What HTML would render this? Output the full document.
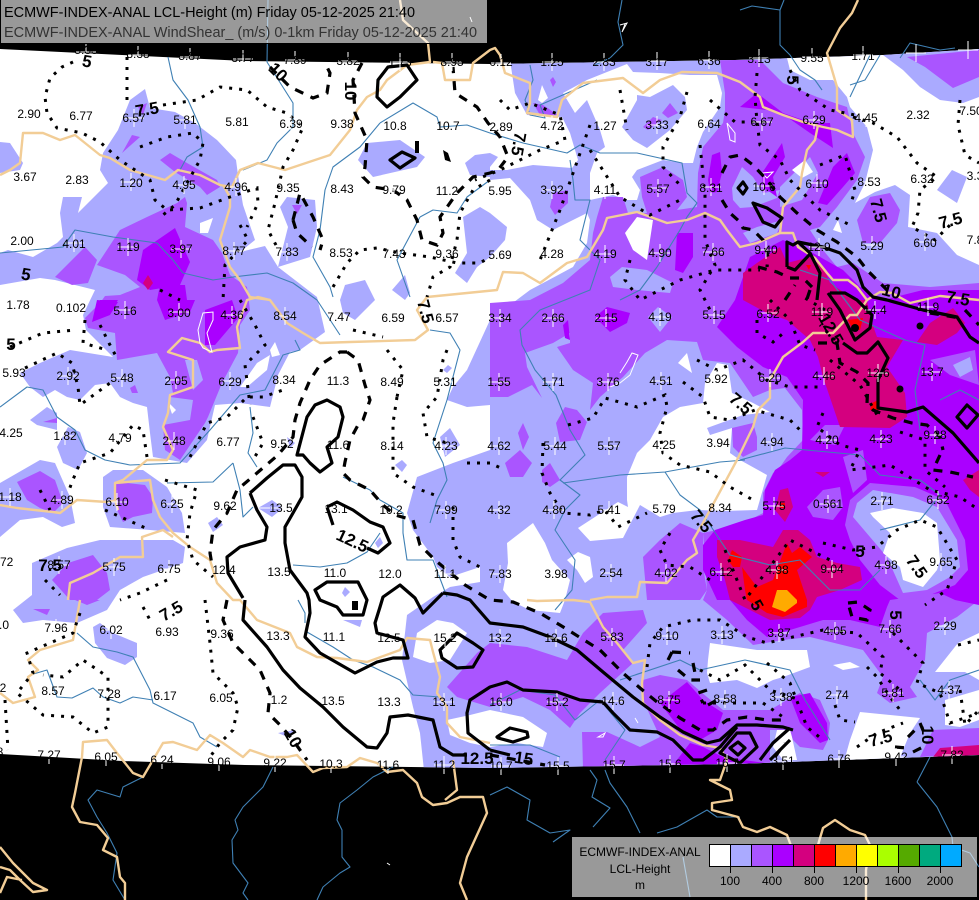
<!DOCTYPE html>
<html><head><meta charset="utf-8"><title>ECMWF-INDEX-ANAL LCL-Height</title>
<style>
html,body{margin:0;padding:0;background:#000;width:979px;height:900px;overflow:hidden}
svg{display:block;font-family:"Liberation Sans",sans-serif}
.b{fill:#aaaaff}.w{fill:#fff}.m{fill:#aa55ff}.d{fill:#aa00ff}.g{fill:#d4007f}.r{fill:#f00}.o{fill:#ffaa00}
.tan{fill:none;stroke:#f2cd96;stroke-width:2.4;stroke-linejoin:round}
.riv{fill:none;stroke:#3f80b4;stroke-width:1.1;stroke-linejoin:round}
.lk{fill:none;stroke:#fff;stroke-width:1}
.s{fill:none;stroke:#000;stroke-width:3.2;stroke-linejoin:round}
.da{fill:none;stroke:#000;stroke-width:3.2;stroke-dasharray:9 8}
.dt{fill:none;stroke:#000;stroke-width:3;stroke-dasharray:3 7}
.t text{font-size:12px;text-anchor:middle;fill:#000}
.c{fill:none;stroke:none;marker-start:url(#x);marker-mid:url(#x);marker-end:url(#x)}
.big text{font-size:17px;font-weight:bold;text-anchor:middle;fill:#000}
</style></head><body>
<svg width="979" height="900" viewBox="0 0 979 900" xmlns="http://www.w3.org/2000/svg">
<defs>
<clipPath id="band"><path d="M0,49 L122,55 245,61 490,64 735,60 883,55 979,49 L979,755 735,764 490,768 245,765 122,761 0,754Z"/></clipPath>
<marker id="x" markerUnits="userSpaceOnUse" markerWidth="22" markerHeight="20" refX="11" refY="10" overflow="visible"><path d="M1,10H21M11,1V19" stroke="#fff" stroke-width="1" fill="none"/></marker>
</defs>
<rect width="979" height="900" fill="#000"/>
<g clip-path="url(#band)">
<rect width="979" height="900" fill="#fff"/>
<!-- blue base -->
<path class="b" d="M425,780L420,733 413,707 402,660 407,615 433,597 450,587 480,582 480,567 450,577 437,567 433,557 413,530 407,513 417,477 453,463 490,450 490,405 467,407 447,400 453,387 467,370 490,320 490,40 979,40 979,780Z"/>
<!-- left blue -->
<path class="b" d="M130,100L145,89 150,108 175,112 195,123 217,140 236,160 238,175 243,205 255,240 240,252 265,246 278,267 317,297 325,332 300,350 290,352 278,375 270,407 240,403 215,405 207,440 187,463 153,457 150,433 147,407 133,403 120,397 110,383 95,385 80,400 67,397 55,390 43,397 30,387 20,373 40,363 70,350 113,357 86,330 83,315 95,290 55,280 40,278 0,285 0,253 8,250 33,257 57,243 63,237 60,213 63,197 82,197 78,213 108,183 100,170 103,153 118,130Z"/>
<path class="w" d="M200,223L213,218 208,233 200,233ZM240,387L257,363 270,355 267,370 247,387ZM270,350L275,342 280,355 272,357ZM193,377L198,368 202,383 197,385Z"/>
<path class="b" d="M0,142L10,143 23,163 20,170 0,173ZM280,207L287,197 315,200 317,227 310,257 278,267 288,227ZM358,160L367,143 400,140 425,157 417,167 373,177ZM340,300L345,285 365,280 375,300 355,320 343,313ZM392,290L405,275 410,293 405,300ZM30,420L47,407 57,413 57,430 37,425ZM57,447L68,427 80,432 87,453 78,470 63,463ZM0,483L40,460 55,463 70,497 75,523 62,527 43,517 20,520 0,537ZM103,477L113,470 143,470 167,487 182,513 185,533 150,530 110,527 103,507ZM32,563L67,548 100,540 173,540 185,547 183,563 143,577 120,590 107,610 77,623 43,620 23,623 13,610 32,595ZM93,627L100,623 113,633 137,643 137,657 125,665 107,658 95,643ZM343,620L362,620 360,627ZM278,733L295,730 290,738ZM208,523L217,517 223,525 213,532ZM258,508L272,500 283,508 272,517ZM287,437L295,443 290,448ZM395,465L402,460 407,465 402,472ZM342,593L345,587 350,592 345,597ZM375,543L380,537 383,543 378,548ZM443,370L448,365 452,368 447,373ZM440,437L450,428 460,445 445,457ZM465,163L475,155 490,153 490,177 470,175Z"/>
<!-- white holes right -->
<path class="w" d="M490,60L510,60 515,93 527,115 562,117 570,133 578,160 572,168 533,165 507,170 490,170Z"/>
<path class="w" d="M490,180L510,178 530,200 537,220 553,230 587,213 590,220 587,243 573,267 545,282 530,290 510,305 490,320Z"/>
<path class="w" d="M563,93L587,80 627,64 633,72 660,73 690,75 717,75 722,93 720,107 703,132 697,147 693,163 683,163 663,160 637,170 632,177 640,190 637,200 627,200 613,195 590,200 590,173 597,153 605,147 600,130 587,100 575,113Z"/>
<path class="w" d="M538,100L542,85 548,98 542,103Z"/>
<path class="b" d="M622,127L637,100 637,95 650,97 673,85 685,97 687,110 670,130 647,148 633,140ZM463,217L480,207 490,213 507,227 505,240 490,257 477,267 467,283 455,273 467,253 465,235ZM490,153L498,157 490,167Z"/>
<path class="w" d="M787,58L883,55 903,70 920,87 940,100 963,103 979,97 979,265 957,255 937,233 908,227 910,195 895,185 875,192 855,203 865,183 873,150 867,127 850,107 847,97 833,80 810,80 790,70Z"/>
<path class="b" d="M937,190L952,170 967,177 957,203Z"/>
<path class="w" d="M627,477L637,453 650,440 663,417 680,407 703,403 705,383 717,363 728,365 732,393 753,403 770,412 743,415 707,428 710,435 732,428 730,453 740,460 767,475 757,510 723,511 698,510 673,513 660,517 640,505 623,538 590,541 578,528 618,502 628,507 627,500Z"/>
<path class="w" d="M507,543L533,523 545,543 552,560 570,580 565,600 560,613 530,610 513,602 503,590 508,563Z"/>
<path class="w" d="M678,363L687,353 692,373ZM567,560L578,552 590,557 593,577 585,583 577,570Z"/>
<path class="w" d="M710,643L757,650 807,650 810,667 783,677 773,680 757,688 737,680 710,683 707,673 708,660ZM833,665L850,662 860,667 843,670ZM958,643L979,633 979,680 965,672 935,672ZM945,700L979,690 979,720 960,727 945,725ZM843,765L850,740 860,712 920,718 910,733 897,765ZM777,730L790,728 797,760 783,760 773,747ZM447,720L470,715 490,710 523,717 547,733 543,747 517,743 490,747 470,743 450,735ZM417,633L437,620 453,623 467,633 450,660 430,663 413,657Z"/>
<!-- mid purple -->
<path class="m" d="M720,60L760,60 783,83 817,97 847,107 853,133 865,157 857,180 837,207 820,227 810,230 823,250 837,267 853,263 883,283 930,287 979,283 979,600 957,617 927,633 925,660 910,687 917,697 890,703 877,693 883,677 863,650 810,637 783,640 753,645 727,620 703,600 707,590 703,533 740,525 763,513 763,493 773,473 780,467 787,457 803,440 802,410 785,388 770,390 753,397 730,363 703,360 697,342 667,340 645,353 623,377 600,397 590,410 593,383 573,370 557,347 570,343 570,333 553,343 525,353 527,367 542,398 532,385 508,397 490,397 490,303 530,300 563,283 590,260 593,233 597,217 603,197 623,197 628,213 647,213 642,197 640,177 663,167 683,180 687,197 677,210 697,207 698,173 703,147 723,123 725,110 725,93Z"/>
<path class="m" d="M647,600L643,557 660,540 680,523 703,533 703,567 707,590 700,600Z"/>
<path class="b" d="M648,317L658,307 672,317 660,332ZM610,277L622,267 647,270 673,283 670,293 637,290 613,287ZM732,188L742,167 753,177 763,193 780,190 777,198 753,207 740,208 733,200ZM780,187L810,157 818,173 802,200 780,207ZM743,233L757,227 783,220 777,233 750,243Z"/>
<path class="w" d="M625,233L637,217 653,220 647,260 633,250ZM792,170L805,160 813,172 802,178ZM838,220L842,233 833,230Z"/>
<path class="m" d="M556,423L565,407 577,410 587,422 580,440 560,442ZM505,463L520,450 532,463 523,477 510,477ZM542,470L550,463 560,480 550,487 542,482ZM518,433L523,423 529,437 523,450ZM732,428L753,423 757,437 757,450 743,457 733,447ZM550,207L553,193 568,190 568,203 555,215ZM662,113L670,103 678,113 668,118ZM643,127L653,117 662,120 648,130ZM550,80L553,77 556,82 553,87ZM533,103L543,105 558,115 540,115ZM857,220L870,197 890,193 900,210 897,223 880,243 863,243ZM907,57L979,50 979,77 953,88 925,67ZM933,730L979,728 979,753 920,757Z"/>
<path class="m" d="M447,687L477,653 490,643 527,647 567,660 583,633 603,613 643,610 647,623 623,650 633,663 600,693 580,713 570,728 550,710 523,697 490,707 457,697Z"/>
<path class="m" d="M583,768L582,732 607,732 640,747 660,737 643,700 643,680 660,675 687,680 707,697 723,710 770,710 787,700 800,693 820,700 830,723 828,740 823,750 800,747 793,740 790,730 770,730 770,768Z"/>
<!-- left mid purple -->
<path class="m" d="M160,160L170,153 187,163 217,180 220,187 207,195 200,187 175,172ZM122,153L132,135 140,137ZM138,107L147,103 143,115ZM55,277L85,247 97,260 88,283 72,285ZM115,483L127,483 145,485 153,497 152,513 133,517 123,522 117,510ZM17,482L40,471 55,480 63,503 53,513 40,508 27,500ZM52,580L68,563 93,555 107,573 110,590 97,600 70,600ZM75,600L100,600 87,605ZM33,609L50,609 47,615ZM43,422L57,418 57,423ZM130,388L135,385 138,393 132,393ZM292,205L302,205 297,214Z"/>
<path class="m" d="M97,265L120,230 147,217 177,203 185,197 187,203 185,227 213,240 222,253 230,275 247,287 250,310 240,325 238,353 222,383 208,417 205,423 180,460 165,450 163,425 190,420 193,400 170,397 173,393 170,377 157,353 117,360 115,333 88,328 85,318 100,303 105,296 120,295 140,287 125,275Z"/>
<path class="b" d="M185,360L197,360 203,380 193,390ZM168,403L190,416 170,423Z"/>
<path class="w" d="M168,402L176,410 172,414Z"/>
<!-- dark -->
<path class="d" d="M735,300L750,257 783,240 813,253 843,270 860,287 883,300 923,290 979,290 979,605 955,600 940,593 890,600 887,607 880,627 850,620 823,620 767,637 747,620 730,600 717,600 703,570 703,545 715,530 745,520 763,515 765,490 775,470 790,460 802,450 803,400 787,377 763,367 737,347 717,327Z"/>
<path class="m" d="M845,525L850,500 870,483 915,487 945,500 965,540 968,570 955,585 925,597 900,600 880,585 860,560 850,540ZM807,507L823,490 840,487 843,507 833,520 813,517ZM843,457L863,450 867,480 853,493ZM930,360L975,350 979,385 950,375ZM810,440L825,425 845,425 835,445Z"/>
<path class="b" d="M853,517L857,503 873,490 913,497 937,507 957,540 960,567 950,577 927,590 903,593 887,557ZM953,365L970,357 973,370 960,377Z"/>
<path class="w" d="M870,513L893,508 923,513 937,523 940,560 937,570 923,587 903,580 900,567 883,553 890,533 873,517Z"/>
<path class="d" d="M740,107L757,93 783,113 812,123 830,123 833,148 810,133 787,117 767,110ZM818,203L833,167 847,153 855,173 843,187 827,205ZM762,173L782,143 785,157 773,177 777,197 763,187ZM708,180L712,155 720,152 722,173 717,192 710,193ZM675,270L677,233 693,233 693,257 683,273ZM595,317L607,307 630,313 627,323 610,332ZM563,325L568,320 570,340 565,338ZM673,765L690,743 703,747 723,757 765,763ZM790,697L810,693 827,723 828,740 820,743 800,723ZM660,703L687,682 703,700 723,713 717,730 700,740 683,733ZM100,300L118,300 108,315 93,320ZM157,300L195,300 190,312 165,320ZM205,310L232,300 238,318 215,345 205,345ZM143,250L175,228 190,262 180,285 150,290 137,280ZM160,285L185,285 187,300 157,300ZM97,300L118,302 110,315 92,322Z"/>
<!-- magenta -->
<path class="g" d="M743,300L743,273 757,263 780,247 787,263 810,257 823,267 830,283 855,300 867,300 870,317 877,337 903,340 887,367 905,393 907,417 890,428 840,427 823,377 818,357 810,340 787,320 767,313Z"/>
<path class="g" d="M917,342L937,345 957,333 965,323 953,308 930,323ZM815,472L830,472 823,477ZM780,490L788,488 793,507 785,522 775,510ZM963,480L979,470 979,497 970,490ZM933,757L940,748 979,745 979,755ZM143,283L148,275 153,283 148,290Z"/>
<path class="g" d="M717,557L717,540 740,540 773,547 783,530 798,530 810,540 817,557 837,563 860,567 862,580 840,590 817,597 810,610 800,618 770,620 750,610 730,600 725,580Z"/>
<path class="r" d="M848,320L863,318 860,330 853,330ZM872,403L878,400 880,410 870,410ZM806,265L811,265 809,270ZM781,503L785,503 785,508 780,508ZM728,560L732,550 742,557 740,567 733,567ZM742,567L757,587 773,580 787,543 792,553 800,547 812,557 797,570 807,600 807,607 783,617 767,613 747,600 745,590Z"/>
<path class="o" d="M777,590L787,590 797,600 797,603 785,612 772,607Z"/>
</g>
<!-- rivers -->
<g class="riv">
<path d="M168,57L173,80 188,100 200,127 203,147 187,157 180,170"/>
<path d="M268,0L267,62 293,103 293,127 277,143 267,160 243,170"/>
<path d="M380,123L360,147 333,167 325,190 320,230 313,257 330,287 333,297"/>
<path d="M380,123L413,103 437,117 440,127 467,125 490,133 523,143 567,153 580,145 600,153 637,153 682,163 687,193 697,203 687,217 680,230 657,267 640,290 620,300"/>
<path d="M420,217L433,210 457,213 467,197 490,180M420,217L397,260 410,297"/>
<path d="M0,253L63,247 75,230 113,237 157,243 173,260 183,273 213,280 233,277 267,273 293,283 317,300 340,335"/>
<path d="M0,407L27,387 43,390 57,417 75,430 85,450 105,460 130,465 180,463 210,430 240,395 265,390 283,355 300,350 295,340"/>
<path d="M250,407L253,433 248,453 257,467M233,463L240,490 243,517 253,507M167,483L213,482 233,463"/>
<path d="M293,565L320,567 347,563 367,552 380,533M343,477L370,490 380,500 403,513 403,533 407,560 433,560 447,597M430,523L437,500 447,480 443,463 433,443 447,400 460,350 450,333 430,330"/>
<path d="M307,632L333,647 353,660 373,667 400,680 413,695 440,697M298,600L305,613 305,623"/>
<path d="M77,633L93,647 117,652 133,657 150,690 153,703 173,713 193,723 200,737 217,747M30,675L47,670 57,697 72,698 93,688 103,697 120,703 133,697 153,700"/>
<path d="M143,777L123,787 120,797 97,790 88,800 97,817 107,833 117,853 113,880 125,900"/>
<path d="M273,767L263,787 243,807 235,820 238,830 232,840 233,863 248,883 243,893 248,900"/>
<path d="M393,767L373,777 357,790 340,803 337,820 342,830 342,857 350,867 340,873 323,887 317,900"/>
<path d="M490,795L507,787 530,800 527,820 550,833 570,830 553,842M590,770L597,780 592,797 610,808 593,827M605,770L610,783 627,807 640,833M657,833L677,827 707,810 717,817 740,817M917,782L930,757M917,782L937,807 952,837 953,847 970,853 979,867"/>
<path d="M683,857L690,897"/>
<path d="M622,0L618,22 623,45 610,58 595,65"/>
<path d="M740,10L752,6 780,10 784,0M780,10L780,45 790,55 800,70 815,80 822,90M900,58L910,43 940,50 955,48"/>
<path d="M880,55L865,80 850,85M850,97L870,55"/>
<path d="M530,65L533,80 525,100 530,115 545,118 540,105 597,80"/>
<path d="M570,160L573,180 575,200 590,200 580,240 600,260 590,290 540,310 520,330 522,345 535,370 556,395 570,430 585,455 570,470 560,480 580,495 565,510 555,530 575,560 572,590 555,610M563,483L620,475 665,472 720,462 745,460M665,472L680,495 700,510 730,555 770,565 800,560 830,590 860,590 880,570"/>
<path d="M740,460L785,448 860,455 880,475 920,480 940,495 920,520 880,530M800,270L830,280 860,320 905,340 925,345 915,390 920,430M940,400L960,390 979,400"/>
<path d="M490,705L520,690 555,695 575,720 600,700 625,730 605,760M620,680L680,660 700,670 745,660 790,670 805,700 830,740M920,680L935,700 950,680 979,670"/>
<path d="M490,745L530,745 560,757"/>
</g>
<!-- borders -->
<g class="tan">
<path d="M0,175L10,170 20,163 23,133 43,133 60,140 75,135 100,155 110,158 130,170 165,180 178,170 200,175 220,185 232,187 240,170 258,163 285,170 315,160 330,155 350,130 357,110 367,97 380,90 387,80 407,65 430,62 428,43 403,20 400,0"/>
<path d="M433,62L442,63 445,80 470,80 473,63 490,50 495,48 500,55 505,73 530,83 530,103 527,113 557,117 562,100 583,83 623,78 643,93 660,80 682,72 717,73 740,82 760,97 763,107 783,115 803,122 823,127 837,130 853,137 852,120 837,110 837,87 827,53 840,28 852,13 858,0"/>
<path d="M818,125L815,140 807,150 802,173 800,187 783,207 780,233 793,233 798,247 815,258 827,273 833,280 848,280 857,287 867,300 880,292 892,293 910,303 940,296 979,300"/>
<path d="M780,233L757,243 740,247 727,230 720,220 705,213 687,220 667,223 637,212 607,218 603,230 587,257 567,263 540,283 523,273 503,272 497,290 467,293 427,297 417,310 428,330 415,340 350,342 320,343 303,333 287,323 270,300 258,297 247,300 237,327 240,348 217,350 210,352 200,343 182,338 168,352 193,360 193,387 170,395 168,413 163,427 173,450 167,460 147,460 123,480 115,483 115,500 118,510"/>
<path d="M270,300L250,297 240,280 230,267 220,240 230,207 230,197 223,185"/>
<path d="M115,483L150,480 153,500 160,517 173,533 190,547 210,560 217,583 233,600 240,600 257,620 290,633 297,647 317,657 337,658 367,662 400,650 407,638 430,640 433,652 440,677 437,693 447,707 447,723 460,737 490,743"/>
<path d="M643,703L660,720 680,735 703,745 720,748 727,760 720,780 710,780 730,790 732,800 712,803 712,810 738,817 743,827 757,832 770,827 787,835 790,843"/>
<path d="M527,600L537,601 573,600 590,602 603,627 617,643 633,663 645,660 642,683 643,703"/>
<path d="M590,600L607,597 637,597 640,582 667,583 687,560 697,553 693,540 703,523 737,460 753,427 758,410 770,398 770,380 783,357 803,342 813,333 833,333 850,315 857,315 867,300"/>
<path d="M0,505L17,508 53,512 60,513 77,500 107,502 117,500"/>
<path d="M68,600L70,583 93,573 120,557 143,557 142,537 163,530 173,537"/>
<path d="M80,600L73,640 40,650 28,660 38,670 28,677 35,697 13,703 0,693"/>
<path d="M82,757L83,742 107,740 117,753 133,773 143,777 163,743 173,742 197,750 210,735 223,743 243,757 250,750 270,757 287,757 297,755 313,772 323,768 347,767 360,758 377,763 387,772 403,770 417,783 422,797 433,805 447,803 460,797 483,797 487,813 467,857 460,883 467,900"/>
<path d="M453,760L457,790 445,800"/>
<path d="M82,757L75,793 72,807 80,822 97,825 108,838 103,850 117,857 120,877 125,883 125,900"/>
<path d="M0,847L13,863 33,883 47,890 33,892 20,880 10,870 0,867M0,893L7,877 22,880"/>
<path d="M790,843L796,860M818,845L823,828 835,820 850,830 865,835 870,845 866,870 866,900"/>
</g>
<g class="lk">
<path d="M200,343L198,330 203,313 213,312 213,320 207,333 212,352 203,348Z"/>
<path d="M620,373L627,362 632,353 638,355 630,375 620,383 610,387"/>
<path d="M727,123L735,133 735,142 730,140 728,128Z"/>
<path d="M762,173L773,172 767,178Z"/>
<path d="M620,25L627,23 622,32 625,24"/>
<path d="M387,863L390,865M598,737L605,733 603,737Z"/>
<path d="M635,718L638,723M470,17L472,22M258,508L270,508"/>
</g>
<g clip-path="url(#band)">
<!-- solid contours -->
<g class="s">
<path d="M377,97L378,80 388,67 407,65 417,80 400,97 387,107Z"/>
<path d="M390,160L402,152 415,158 400,168Z"/>
<path d="M738,188L743,182 747,188 743,194Z"/>
<path d="M753,203L767,208 782,218 775,227 763,222Z"/>
<path d="M787,267L787,242 793,245 798,242 810,253 820,273 817,300M787,267L795,270 810,254"/>
<path d="M798,242L823,247 840,253 857,270 863,287 873,297 887,300 923,310 957,317 970,337 979,343"/>
<path d="M830,293L845,293 857,300 872,315 870,328 855,340 840,310 828,293"/>
<path d="M843,343L857,353 867,353 878,342 888,358 878,380 878,408 907,412 923,407 953,433 979,463"/>
<path d="M957,417L967,405 978,415 967,428Z"/>
<path d="M443,593L457,595 470,600 490,623 523,627 550,637 577,650 603,672 633,697 660,717 683,732 707,743 720,740 737,725 757,725 783,727 793,730"/>
<path d="M245,600L243,620 267,647 283,670 300,688 323,707 343,727 367,747 377,748 387,733 390,717 408,715 433,720 440,747 453,755 467,755"/>
<path d="M490,750L468,733 467,713 470,700 490,687 507,682 523,690 557,692 580,700 603,702 613,713 630,730 657,732 673,740 693,760 703,760 720,747 737,727"/>
<path d="M490,750L510,755"/>
<path d="M497,737L510,728 527,732 528,737 513,742 498,738Z"/>
<path d="M250,493L267,478 283,465 295,465 302,477 302,497 293,513 285,527 285,543 290,570 307,593 309,600 310,613 305,637 320,653 355,673 377,662 393,658 408,658 403,640 377,633 375,623 380,607 383,597 400,585 415,598 423,613 433,603 443,593"/>
<path d="M250,493L257,510 267,527 265,540 240,547 227,557 228,573 243,598"/>
<path d="M297,455L307,417 315,405 327,400 340,407 343,417 338,437 327,447 332,463 320,472 310,463 303,455Z"/>
<path d="M327,507L337,502 353,510 370,522 383,527 390,543 378,553 367,548M327,507L333,525"/>
<path d="M315,590L327,582 358,582 367,600 363,615 343,615 337,607 320,600Z"/>
<path d="M440,650L457,633 473,643 483,650 473,667 457,668 442,658Z"/>
<path d="M720,753L737,733 750,733 757,747 740,763ZM730,748L738,742 745,748 738,755Z"/>
<path d="M760,760L773,743 790,728"/>
<path d="M770,760L790,740"/>
</g>
<g fill="#000">
<circle cx="920" cy="326" r="3.5"/><circle cx="900" cy="389" r="3.5"/><circle cx="855" cy="328" r="4"/><rect x="352" y="601" width="6" height="9"/><rect x="415" y="141" width="4" height="12"/><path d="M443,150L448,153 451,162 445,160Z"/>
</g>
<!-- dashed -->
<g class="da">
<path d="M270,67L290,87 313,98 327,93 330,73 325,63"/>
<path d="M362,63L353,80 355,113 367,140 365,167 363,177 373,187 393,190 407,200 417,220 422,240 437,245 443,233 440,217 457,193 473,177 490,173 498,170 508,157 500,137 488,123 477,107 455,93 453,67"/>
<path d="M293,220L300,193 313,217 323,240 320,250M293,220L297,233 312,247"/>
<path d="M722,173L730,157 740,155 753,165 767,180 780,197 797,213 817,230 837,242 857,257 867,270 880,283 887,290"/>
<path d="M722,200L730,213 740,222 743,228 753,230 763,240 768,257 767,267"/>
<path d="M758,267L777,272 790,278 803,278 812,287M785,300L795,285M810,290L805,305"/>
<path d="M818,343L837,343 840,363 857,372 868,383 867,403 873,410 893,418 912,423 927,425 940,437 943,450"/>
<path d="M940,455L933,470 950,472 973,477"/>
<path d="M347,352L340,352 320,365 310,380 300,403 295,420 293,437 278,455 257,473 237,490 227,513 213,530 210,553 212,565"/>
<path d="M227,600L223,620 233,643 260,670 270,693 268,713 280,725 293,740 307,760"/>
<path d="M347,352L358,360 365,385 370,400 363,420 358,425 350,440 345,462 343,473 350,480 370,490 383,505 395,515 413,520 420,545 435,560 465,585 490,600 513,602 540,613 560,625 600,650 623,673 640,688 657,702 680,718 700,730 713,730 727,720 747,717 767,720 783,720"/>
<path d="M672,652L668,660M672,652L690,653M693,663L695,673M678,670L690,680 700,680M707,690L698,693 703,703M708,705L717,700"/>
<path d="M775,757L785,743M920,723L925,735M913,752L925,746M895,747L907,748M908,737L917,728"/>
<path d="M848,603L858,602 870,610 867,620 852,617 848,603"/>
<path d="M490,755L545,765"/>
<path d="M965,310L979,325M930,313L960,318"/>
</g>
<!-- dotted -->
<g class="dt">
<path d="M127,57L127,100"/>
<path d="M73,62L62,67 50,78 45,97 47,113 57,128 82,133 100,142 120,160 150,180 155,200 167,210 200,208 230,197 257,188 258,203 247,227"/>
<path d="M163,105L197,100 220,87 247,90 267,107 287,113 303,127 293,150 283,167 275,203 268,230 277,247"/>
<path d="M140,147L167,137 193,133 203,143 200,160 187,183 175,205 163,215"/>
<path d="M240,225L248,240 225,265 223,300"/>
<path d="M333,287L347,263 360,250 377,248 400,253 430,257 457,263 480,263 490,257"/>
<path d="M490,180L473,190 460,213 457,240 450,267 433,277 427,297"/>
<path d="M687,92L680,117 663,147 663,167 680,185"/>
<path d="M590,150L620,197 650,215 680,200"/>
<path d="M500,100L510,110 530,103 560,115 565,140 540,150 500,170 475,180"/>
<path d="M853,117L873,123 897,137 917,163 937,177 920,190 918,213 912,227 935,240 950,225"/>
<path d="M960,100L958,125 965,155 979,163"/>
<path d="M757,73L755,97 757,122 760,145 780,160 790,180 820,210 850,225"/>
<path d="M790,70L800,90 830,110 855,115"/>
<path d="M710,100L735,122 765,122M820,165L845,155 855,190 852,200"/>
<path d="M700,145L705,195 705,240 715,265 700,290 710,310"/>
<path d="M620,90L627,130M590,125L560,210 540,260"/>
<path d="M630,260L625,280 640,300 660,290 680,280 715,270 760,270"/>
<path d="M568,425L593,418 605,398 637,407 665,395 667,407 660,433 663,453 680,465 710,472 730,487 753,500"/>
<path d="M543,443L542,473 550,493 563,513 590,515 605,510 618,527 647,513"/>
<path d="M683,382L703,397 710,417 730,420 755,410 790,420 800,430"/>
<path d="M697,360L717,370 743,360 767,380 790,387 820,387"/>
<path d="M757,320L757,333 773,342 787,330"/>
<path d="M770,300L790,320 800,345 815,350M825,310L800,295M835,340L820,325"/>
<path d="M823,413L817,427 840,445 860,450 850,470 890,465 930,490 960,497 979,510"/>
<path d="M830,360L860,385 880,420M900,432L925,440 925,470 945,487"/>
<path d="M823,543L853,550 877,547 897,530 920,520 937,527 957,560 947,590 925,605"/>
<path d="M670,533L660,550 667,565 690,567 710,580"/>
<path d="M725,550L745,600 790,540 830,560"/>
<path d="M647,667L650,643 663,627 693,620 720,620 747,637 767,643 823,630 857,633 883,657 880,673 900,690"/>
<path d="M893,633L923,663 917,683 940,693 950,723 979,713"/>
<path d="M867,667L877,677 890,697 900,710"/>
<path d="M767,663L790,683 807,727 823,740"/>
<path d="M700,670L720,680 745,665 770,690 800,700"/>
<path d="M703,703L763,703 783,717"/>
<path d="M857,747L877,733 903,723"/>
<path d="M835,705L840,720 855,722"/>
<path d="M960,690L965,725 979,710M958,645L979,640"/>
<path d="M10,347L43,333 75,330"/>
<path d="M85,320L83,343 107,350"/>
<path d="M25,368L57,353 72,363 78,387 80,405 110,383"/>
<path d="M147,457L143,430 133,425 110,453 80,463 72,482 68,493"/>
<path d="M190,457L207,423 227,417 247,397 263,397 283,390"/>
<path d="M165,480L197,490 190,513 187,540 193,560 213,577"/>
<path d="M167,580L140,593 120,600"/>
<path d="M253,417L263,443 253,460"/>
<path d="M397,397L393,423 393,473 413,487 440,497"/>
<path d="M387,350L403,370 397,397"/>
<path d="M447,350L443,360 437,397 423,413 427,437 447,443"/>
<path d="M353,330L383,337"/>
<path d="M453,507L453,540 460,557 480,567"/>
<path d="M467,463L490,463 505,470"/>
<path d="M80,613L73,633 50,643 27,653 33,673 17,693 43,715 73,717 93,733 108,727 108,677 83,660 63,677 43,675"/>
<path d="M143,607L150,620"/>
<path d="M205,600L210,643 213,673 233,693 238,707 233,730 220,743 210,757"/>
<path d="M240,300L255,325 265,345 245,365 250,405"/>
<path d="M100,325L110,345 118,360M160,290L180,300"/>
<path d="M40,490L50,510M105,510L150,530M45,580L60,595M5,700L8,750"/>
</g>
</g>
<!-- crosses -->
<g>
<path class="c" d="M86,52 138,55 190,57 243,59 295,60 348,61 400,62 452,62 501,63 552,62 604,62 657,61 709,60 759,58 812,57 863,55 916,53 968,50"/>
<path class="c" d="M134,118 185,120 237,122 291,123 501,127 552,125 657,125 709,123 762,122 814,120 866,118 971,111"/>
<path class="c" d="M131,182 184,185 236,187 288,188 394,190 447,190 552,190 605,190 658,188 711,187 764,186 817,183 869,182 922,178"/>
<path class="c" d="M74,243 128,247 181,249 234,251 287,252 605,254 660,253 713,252 766,250 819,247 872,245 925,242"/>
<path class="c" d="M125,310 179,312 232,315 285,316 500,318 553,318 606,318 660,317 714,315 768,313 822,312 875,310 928,307"/>
<path class="c" d="M68,376 122,378 176,380 230,381 284,380 445,382 499,382 553,382 608,382 661,381 716,379 770,378 824,376 878,373 932,372"/>
<path class="c" d="M65,436 174,441 228,442 446,446 499,446 555,446 609,446 664,445 772,442 827,440 881,439 935,435"/>
<path class="c" d="M10,497 62,500 117,502 172,504 225,506 281,508 446,510 499,510 554,510 609,510 774,506 828,504 882,501 938,500"/>
<path class="c" d="M59,565 114,567 169,569 445,574 500,574 556,574 611,573 666,573 721,572 777,570 832,569 886,565 941,562"/>
<path class="c" d="M56,628 111,630 445,638 500,638 556,638 612,637 667,636 722,635 779,633 835,631 890,629 945,626"/>
<path class="c" d="M333,701 444,702 501,702 557,702 613,701 669,700 725,699 781,697 837,695 893,693 949,690"/>
<path class="c" d="M49,755 106,757 162,760 219,762 275,763 331,764 388,765 444,765 501,766 558,766 614,765 670,764 727,763 783,761 839,759 896,757 952,755"/>
</g>
<!-- labels -->
<g class="t">
<text x="33" y="50">1.52</text><text x="86" y="54">5.33</text><text x="138" y="58">8.38</text><text x="190" y="60">5.87</text><text x="243" y="62">3.77</text><text x="295" y="64">7.89</text><text x="348" y="65">3.82</text><text x="400" y="66">1.73</text><text x="452" y="66">8.95</text><text x="501" y="66">0.12</text><text x="552" y="66">1.25</text><text x="604" y="66">2.83</text><text x="657" y="66">3.17</text><text x="709" y="65">6.36</text><text x="759" y="63">3.13</text><text x="812" y="62">9.55</text><text x="863" y="60">1.71</text>
<text x="29" y="118">2.90</text><text x="81" y="120">6.77</text><text x="134" y="122">6.57</text><text x="185" y="124">5.81</text><text x="237" y="126">5.81</text><text x="291" y="128">6.39</text><text x="342" y="128">9.38</text><text x="395" y="130">10.8</text><text x="448" y="130">10.7</text><text x="501" y="131">2.89</text><text x="552" y="130">4.72</text><text x="605" y="130">1.27</text><text x="657" y="129">3.33</text><text x="709" y="128">6.64</text><text x="762" y="126">6.67</text><text x="814" y="124">6.29</text><text x="866" y="122">4.45</text><text x="918" y="119">2.32</text><text x="971" y="115">7.50</text>
<text x="25" y="181">3.67</text><text x="77" y="184">2.83</text><text x="131" y="187">1.20</text><text x="184" y="189">4.95</text><text x="236" y="191">4.96</text><text x="288" y="192">9.35</text><text x="342" y="193">8.43</text><text x="394" y="194">9.79</text><text x="447" y="195">11.2</text><text x="500" y="195">5.95</text><text x="552" y="194">3.92</text><text x="605" y="194">4.11</text><text x="658" y="193">5.57</text><text x="711" y="192">8.31</text><text x="764" y="191">10.6</text><text x="817" y="188">6.10</text><text x="869" y="186">8.53</text><text x="922" y="183">6.32</text><text x="975" y="180">3.3</text>
<text x="22" y="245">2.00</text><text x="74" y="248">4.01</text><text x="128" y="251">1.19</text><text x="181" y="253">3.97</text><text x="234" y="255">8.77</text><text x="287" y="256">7.83</text><text x="341" y="257">8.53</text><text x="394" y="258">7.43</text><text x="447" y="258">9.36</text><text x="500" y="259">5.69</text><text x="552" y="258">4.28</text><text x="605" y="258">4.19</text><text x="660" y="257">4.90</text><text x="713" y="256">7.66</text><text x="766" y="254">9.40</text><text x="819" y="251">12.9</text><text x="872" y="250">5.29</text><text x="925" y="247">6.60</text><text x="975" y="244">7.8</text>
<text x="18" y="309">1.78</text><text x="71" y="312">0.102</text><text x="125" y="315">5.16</text><text x="179" y="317">3.00</text><text x="232" y="319">4.36</text><text x="285" y="320">8.54</text><text x="339" y="321">7.47</text><text x="393" y="322">6.59</text><text x="447" y="322">6.57</text><text x="500" y="322">3.34</text><text x="553" y="322">2.66</text><text x="606" y="322">2.15</text><text x="660" y="321">4.19</text><text x="714" y="319">5.15</text><text x="768" y="318">6.52</text><text x="822" y="316">11.9</text><text x="875" y="314">14.4</text><text x="928" y="311">11.9</text>
<text x="14" y="377">5.93</text><text x="68" y="380">2.92</text><text x="122" y="382">5.48</text><text x="176" y="385">2.05</text><text x="230" y="386">6.29</text><text x="284" y="384">8.34</text><text x="338" y="385">11.3</text><text x="392" y="386">8.49</text><text x="445" y="386">5.31</text><text x="499" y="386">1.55</text><text x="553" y="386">1.71</text><text x="608" y="386">3.76</text><text x="661" y="385">4.51</text><text x="716" y="383">5.92</text><text x="770" y="382">6.20</text><text x="824" y="380">4.46</text><text x="878" y="377">12.6</text><text x="932" y="376">13.7</text>
<text x="11" y="437">4.25</text><text x="65" y="440">1.82</text><text x="120" y="442">4.79</text><text x="174" y="445">2.48</text><text x="228" y="446">6.77</text><text x="282" y="448">9.52</text><text x="338" y="449">11.6</text><text x="392" y="450">8.14</text><text x="446" y="450">4.23</text><text x="499" y="450">4.62</text><text x="555" y="450">5.44</text><text x="609" y="450">5.57</text><text x="664" y="449">4.25</text><text x="718" y="447">3.94</text><text x="772" y="446">4.94</text><text x="827" y="444">4.20</text><text x="881" y="443">4.23</text><text x="935" y="439">9.28</text>
<text x="10" y="501">1.18</text><text x="62" y="504">4.89</text><text x="117" y="506">6.10</text><text x="172" y="508">6.25</text><text x="225" y="510">9.62</text><text x="281" y="512">13.5</text><text x="336" y="513">13.1</text><text x="391" y="514">10.2</text><text x="446" y="514">7.99</text><text x="499" y="514">4.32</text><text x="554" y="514">4.80</text><text x="609" y="514">5.41</text><text x="664" y="513">5.79</text><text x="720" y="512">8.34</text><text x="774" y="510">5.75</text><text x="828" y="508">0.561</text><text x="882" y="505">2.71</text><text x="938" y="504">6.52</text>
<text x="5" y="566">.72</text><text x="59" y="569">8.57</text><text x="114" y="571">5.75</text><text x="169" y="573">6.75</text><text x="224" y="574">12.4</text><text x="279" y="576">13.5</text><text x="335" y="577">11.0</text><text x="390" y="578">12.0</text><text x="445" y="578">11.1</text><text x="500" y="578">7.83</text><text x="556" y="578">3.98</text><text x="611" y="577">2.54</text><text x="666" y="577">4.02</text><text x="721" y="576">6.12</text><text x="777" y="574">4.98</text><text x="832" y="573">9.04</text><text x="886" y="569">4.98</text><text x="941" y="566">9.65</text>
<text x="4" y="629">.0</text><text x="56" y="632">7.96</text><text x="111" y="634">6.02</text><text x="167" y="636">6.93</text><text x="222" y="638">9.36</text><text x="278" y="640">13.3</text><text x="334" y="641">11.1</text><text x="389" y="642">12.5</text><text x="445" y="642">15.2</text><text x="500" y="642">13.2</text><text x="556" y="642">12.6</text><text x="612" y="641">5.83</text><text x="667" y="640">9.10</text><text x="722" y="639">3.13</text><text x="779" y="637">3.87</text><text x="835" y="635">4.05</text><text x="890" y="633">7.66</text><text x="945" y="630">2.29</text>
<text x="3" y="692">2</text><text x="53" y="695">8.57</text><text x="109" y="698">7.28</text><text x="165" y="700">6.17</text><text x="221" y="702">6.05</text><text x="279" y="704">1.2</text><text x="333" y="705">13.5</text><text x="389" y="706">13.3</text><text x="444" y="706">13.1</text><text x="501" y="706">16.0</text><text x="557" y="706">15.2</text><text x="613" y="705">14.6</text><text x="669" y="704">8.75</text><text x="725" y="703">8.58</text><text x="781" y="701">3.38</text><text x="837" y="699">2.74</text><text x="893" y="697">5.81</text><text x="949" y="694">4.37</text>
<text x="0" y="756">8</text><text x="49" y="759">7.27</text><text x="106" y="761">6.05</text><text x="162" y="764">6.24</text><text x="219" y="766">9.06</text><text x="275" y="767">9.22</text><text x="331" y="768">10.3</text><text x="388" y="769">11.6</text><text x="444" y="769">11.2</text><text x="501" y="770">10.7</text><text x="558" y="770">15.5</text><text x="614" y="769">15.7</text><text x="670" y="768">15.6</text><text x="727" y="767">16.7</text><text x="783" y="765">3.51</text><text x="839" y="763">6.76</text><text x="896" y="761">9.42</text><text x="952" y="759">7.82</text>
</g>
<!-- contour labels -->
<g class="big">
<text transform="translate(86,67) rotate(10)">5</text>
<text transform="translate(148,115) rotate(-10)">7.5</text>
<text transform="translate(274,76) rotate(45)">10</text>
<text transform="translate(345,91) rotate(90)">10</text>
<text transform="translate(25,280) rotate(10)">5</text>
<text transform="translate(513,143) rotate(100)">7.5</text>
<text transform="translate(787,80) rotate(90)">5</text>
<text transform="translate(873,212) rotate(75)">7.5</text>
<text transform="translate(952,226) rotate(-15)">7.5</text>
<text transform="translate(890,297) rotate(15)">10</text>
<text transform="translate(957,304) rotate(10)">7.5</text>
<text transform="translate(11,350)">5</text>
<text transform="translate(420,313) rotate(75)">7.5</text>
<text transform="translate(350,546) rotate(25)">12.5</text>
<text transform="translate(50,571)">7.5</text>
<text transform="translate(737,408) rotate(40)">7.5</text>
<text transform="translate(697,525) rotate(50)">7.5</text>
<text transform="translate(860,557)">5</text>
<text transform="translate(912,570) rotate(55)">7.5</text>
<text transform="translate(826,332) rotate(60)">12.5</text>
<text transform="translate(174,616) rotate(-30)">7.5</text>
<text transform="translate(288,741) rotate(60)">10</text>
<text transform="translate(477,764)">12.5</text>
<text transform="translate(523,764) rotate(8)">15</text>
<text transform="translate(752,608) rotate(60)">5</text>
<text transform="translate(890,615) rotate(90)">5</text>
<text transform="translate(882,744) rotate(-15)">7.5</text>
<text transform="translate(922,735) rotate(90)">10</text>
</g>
<!-- header -->
<rect x="1" y="0" width="486" height="43" fill="#fff" fill-opacity="0.6"/>
<path d="M0.5,0V43.5H487.5V0" fill="none" stroke="#000" stroke-width="1"/>
<text x="4" y="17" font-size="14.5" fill="#000" textLength="411" lengthAdjust="spacingAndGlyphs">ECMWF-INDEX-ANAL LCL-Height (m) Friday 05-12-2025 21:40</text>
<text x="4" y="37" font-size="14.5" fill="#333" textLength="473" lengthAdjust="spacingAndGlyphs">ECMWF-INDEX-ANAL WindShear_ (m/s) 0-1km Friday 05-12-2025 21:40</text>
<!-- legend -->
<rect x="572" y="837" width="405" height="60" fill="#fff" fill-opacity="0.6"/>
<g font-size="12" fill="#000" text-anchor="middle">
<text x="640" y="856">ECMWF-INDEX-ANAL</text>
<text x="640" y="873">LCL-Height</text>
<text x="640" y="889">m</text>
<text x="730" y="885">100</text><text x="772" y="885">400</text><text x="814" y="885">800</text><text x="856" y="885">1200</text><text x="898" y="885">1600</text><text x="940" y="885">2000</text>
</g>
<g stroke="#000" stroke-width="1">
<rect x="709.5" y="844.5" width="21" height="22" fill="#fff"/>
<rect x="730.5" y="844.5" width="21" height="22" fill="#aaaaff"/>
<rect x="751.5" y="844.5" width="21" height="22" fill="#aa55ff"/>
<rect x="772.5" y="844.5" width="21" height="22" fill="#aa00ff"/>
<rect x="793.5" y="844.5" width="21" height="22" fill="#d4007f"/>
<rect x="814.5" y="844.5" width="21" height="22" fill="#ff0000"/>
<rect x="835.5" y="844.5" width="21" height="22" fill="#ffaa00"/>
<rect x="856.5" y="844.5" width="21" height="22" fill="#ffff00"/>
<rect x="877.5" y="844.5" width="21" height="22" fill="#aaff00"/>
<rect x="898.5" y="844.5" width="21" height="22" fill="#55aa00"/>
<rect x="919.5" y="844.5" width="21" height="22" fill="#00aa7f"/>
<rect x="940.5" y="844.5" width="21" height="22" fill="#00aaff"/>
<path d="M730.5,867V873M772.5,867V873M814.5,867V873M856.5,867V873M898.5,867V873M940.5,867V873" fill="none"/>
</g>
</svg>
</body></html>
